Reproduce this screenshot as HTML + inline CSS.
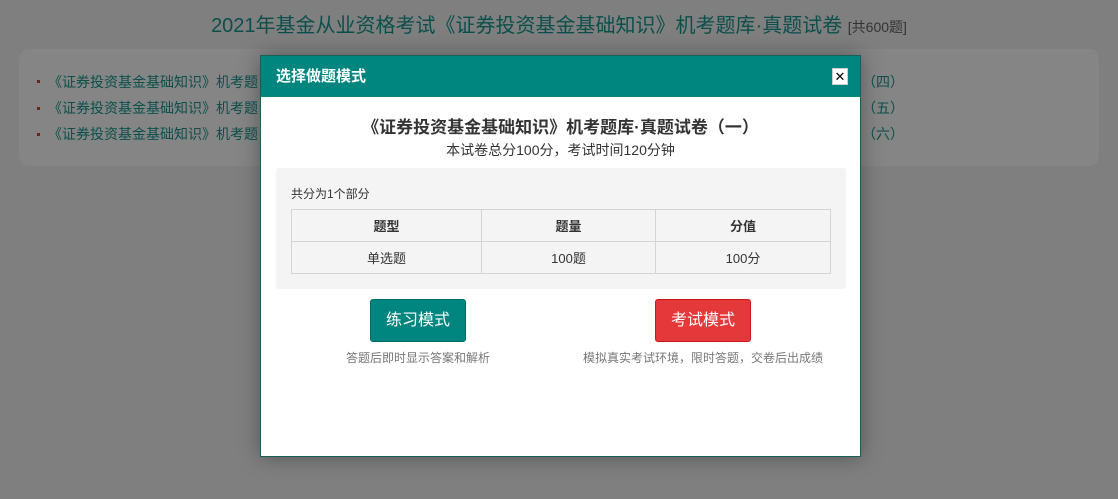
<!DOCTYPE html>
<html style="background:#7f7f7f"><head><meta charset="utf-8"><style>
*{margin:0;padding:0;box-sizing:border-box}
body{width:1118px;height:499px;background:rgb(127,127,127);font-family:"Liberation Sans","Noto Sans CJK SC",sans-serif;position:relative;overflow:hidden}
.bg{position:absolute;left:0;top:0;width:1118px;height:499px}
.title{position:absolute;top:13px;left:0;width:1118px;text-align:center;font-size:20px;color:#0b4f4b;line-height:26px}
.title small{font-size:14px;color:#333}
.panel{position:absolute;left:19px;top:49px;width:1080px;height:117px;background:rgb(133,133,133);border-radius:10px}
.li{position:absolute;font-size:14px;color:#0b4f4b;line-height:16px}
.dot{position:absolute;width:3px;height:3px;background:#6a2a10}
.modal{position:absolute;left:260px;top:55px;width:601px;height:402px;background:#fff;border:1px solid #1a5e59;box-shadow:0 0 20px rgba(0,0,0,.35)}
.hd{height:41px;background:#00867f;color:#fff;font-weight:bold;font-size:15px;line-height:41px;padding-left:15px}
.x{position:absolute;left:571px;top:12px;width:16px;height:17px;background:#fff;border:1px solid #ccc;font-size:13px;line-height:15px;text-align:center;color:#000}
.h2{position:absolute;top:57px;width:100%;text-align:center;font-size:17px;font-weight:bold;color:#333}
.sub{position:absolute;top:84px;width:100%;text-align:center;font-size:14px;color:#333}
.box{position:absolute;left:15px;top:112px;width:570px;height:121px;background:#f4f4f4;border-radius:3px}
.box p{position:absolute;left:15px;top:17px;font-size:12px;color:#333}
table{position:absolute;left:15px;top:41px;width:540px;border-collapse:collapse;font-size:13px;color:#333}
td,th{border:1px solid #d4d4d4;height:32px;text-align:center}
.btn{position:absolute;top:243px;height:43px;width:96px;color:#fff;font-size:16px;line-height:41px;text-align:center;border-radius:3px}
.d{position:absolute;top:293px;font-size:12px;color:#777;text-align:center}
</style></head><body>
<svg class="bg" width="1118" height="499"><rect width="1118" height="499" fill="#7f7f7f"/><rect x="19" y="49" width="1080" height="117" rx="10" fill="#858585"/></svg>
<div class="title">2021年基金从业资格考试《证券投资基金基础知识》机考题库·真题试卷 <small>[共600题]</small></div>
<div class="dot" style="left:37px;top:80px"></div><div class="li" style="left:48px;top:74px">《证券投资基金基础知识》机考题</div>
<div class="dot" style="left:37px;top:107px"></div><div class="li" style="left:48px;top:100px">《证券投资基金基础知识》机考题</div>
<div class="dot" style="left:37px;top:133px"></div><div class="li" style="left:48px;top:126px">《证券投资基金基础知识》机考题</div>
<div class="li" style="left:862px;top:74px">（四）</div>
<div class="li" style="left:862px;top:100px">（五）</div>
<div class="li" style="left:862px;top:126px">（六）</div>
<div class="modal">
<div class="hd">选择做题模式</div>
<div class="x">✕</div>
<div class="h2">《证券投资基金基础知识》机考题库·真题试卷（一）</div>
<div class="sub">本试卷总分100分，考试时间120分钟</div>
<div class="box"><p>共分为1个部分</p>
<table><tr><th style="width:190px">题型</th><th style="width:174px">题量</th><th>分值</th></tr><tr><td>单选题</td><td>100题</td><td>100分</td></tr></table></div>
<div class="btn" style="left:109px;background:#00867f;border:1px solid #006b66">练习模式</div>
<div class="btn" style="left:394px;background:#e5383b;border:1px solid #c8161a">考试模式</div>
<div class="d" style="left:60px;width:194px">答题后即时显示答案和解析</div>
<div class="d" style="left:300px;width:284px">模拟真实考试环境，限时答题，交卷后出成绩</div>
</div>
</body></html>
